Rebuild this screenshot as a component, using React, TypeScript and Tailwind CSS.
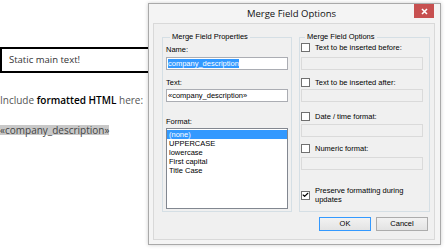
import { Check } from "lucide-react";

const formats = ["(none)", "UPPERCASE", "lowercase", "First capital", "Title Case"];

const options = [
  { label: "Text to be inserted before:", gap: "mt-[1px]", inputGap: "mt-[5px]" },
  { label: "Text to be inserted after:", gap: "mt-[8px]", inputGap: "mt-[2px]" },
  { label: "Date / time format:", gap: "mt-[10px]", inputGap: "mt-[3px]" },
  { label: "Numeric format:", gap: "mt-[7px]", inputGap: "mt-[4px]" },
];

function CheckBox({ checked = false }: { checked?: boolean }) {
  return (
    <span className="flex h-[9px] w-[9px] shrink-0 items-center justify-center border border-[#707070] bg-white">
      {checked && <Check className="h-[8px] w-[8px] text-black" strokeWidth={4} />}
    </span>
  );
}

function MergeFieldDialog() {
  return (
    <div className="absolute left-[148px] top-[3px] flex h-[242px] w-[293px] flex-col border border-[#a9a9a9] bg-[#f4f4f4] font-['Liberation_Sans',Arial,sans-serif] text-[7.5px] text-black shadow-[0_0_4px_rgba(0,0,0,0.2)]">
      <div className="flex h-[19px] shrink-0">
        <div className="flex-1" />
        <div className="self-center font-['Open_Sans',sans-serif] text-[9.5px] leading-[12px] text-[#111]">
          Merge Field Options
        </div>
        <div className="flex flex-1 justify-end pr-[6px]">
          <button className="flex h-[14px] w-[20px] items-center justify-center bg-[#c75050]">
            <svg width="7" height="7" viewBox="0 0 7 7">
              <path d="M1 1L6 6M6 1L1 6" stroke="white" strokeWidth="1.6" />
            </svg>
          </button>
        </div>
      </div>

      <div className="mb-[4px] ml-[4px] mr-[5px] flex flex-1 flex-col border border-[#d9d9d9] bg-[#f0f0f0] pl-[8px] pt-[8px]">
        <div className="flex items-stretch gap-[7px]">
          <fieldset className="w-[130px] border border-[#d5dfe5] px-[3px] pb-[2px]">
            <legend className="ml-[4px] px-[2px] leading-[10px]">Merge Field Properties</legend>
            <div className="mt-[3px] h-[9px] leading-[9px]">Name:</div>
            <div className="mt-[3px] flex h-[13px] w-full items-center border border-[#abadb3] bg-white px-[1px]">
              <span className="bg-[#3399ff] leading-[9px] text-white">company_description</span>
            </div>
            <div className="mt-[8px] h-[9px] leading-[9px]">Text:</div>
            <div className="mt-[2px] flex h-[13px] w-full items-center border border-[#abadb3] bg-white px-[1px] leading-[9px]">
              «company_description»
            </div>
            <div className="mt-[15px] h-[9px] leading-[9px]">Format:</div>
            <div className="mt-[2px] h-[81px] w-full border border-[#828790] bg-white pt-[1px]">
              {formats.map((f, i) => (
                <div
                  key={f}
                  className={
                    i === 0
                      ? "h-[9px] bg-[#3399ff] pl-[2px] leading-[9px] text-white"
                      : "h-[9px] pl-[2px] leading-[9px]"
                  }
                >
                  {f}
                </div>
              ))}
            </div>
          </fieldset>

          <fieldset className="w-[131px] border border-[#d5dfe5] pb-[2px] pl-[1px] pr-[6px]">
            <legend className="ml-[4px] px-[2px] leading-[10px]">Merge Field Options</legend>
            {options.map((o) => (
              <div key={o.label}>
                <div className={`${o.gap} flex h-[9px] items-center gap-[5px] leading-[9px]`}>
                  <CheckBox />
                  <span>{o.label}</span>
                </div>
                <div className={`${o.inputGap} h-[13px] w-full border border-[#dadada] bg-[#f0f0f0]`} />
              </div>
            ))}
            <div className="mt-[16px] flex items-center gap-[5px]">
              <CheckBox checked />
              <span className="leading-[9px]">
                Preserve formatting during
                <br />
                updates
              </span>
            </div>
          </fieldset>
        </div>

        <div className="mt-[5px] flex justify-end gap-[5px] pr-[6px]">
          <button className="h-[14px] w-[52px] border border-[#3399ff] bg-gradient-to-b from-[#f2f2f2] to-[#e3e3e3] text-[7.5px] leading-[12px]">
            OK
          </button>
          <button className="h-[14px] w-[52px] border border-[#acacac] bg-gradient-to-b from-[#f2f2f2] to-[#e3e3e3] text-[7.5px] leading-[12px]">
            Cancel
          </button>
        </div>
      </div>
    </div>
  );
}

export default function App() {
  return (
    <div className="relative h-[249px] w-[445px] overflow-hidden bg-white font-['Open_Sans',sans-serif]">
      <div className="pt-[47px]">
        <div className="flex h-[26px] w-[170px] items-center border-2 border-black pl-[7px] text-[9.5px] text-[#333]">
          Static main text!
        </div>
        <p className="mt-[21px] text-[10px] leading-[12px] text-[#555]">
          Include <b className="font-semibold text-black">formatted HTML</b> here:
        </p>
        <p className="mt-[17px] leading-[10px]">
          <span className="inline-block bg-[#c8c8c8] text-[10px] leading-[10px] text-[#444]">«company_description»</span>
        </p>
      </div>
      <MergeFieldDialog />
    </div>
  );
}
